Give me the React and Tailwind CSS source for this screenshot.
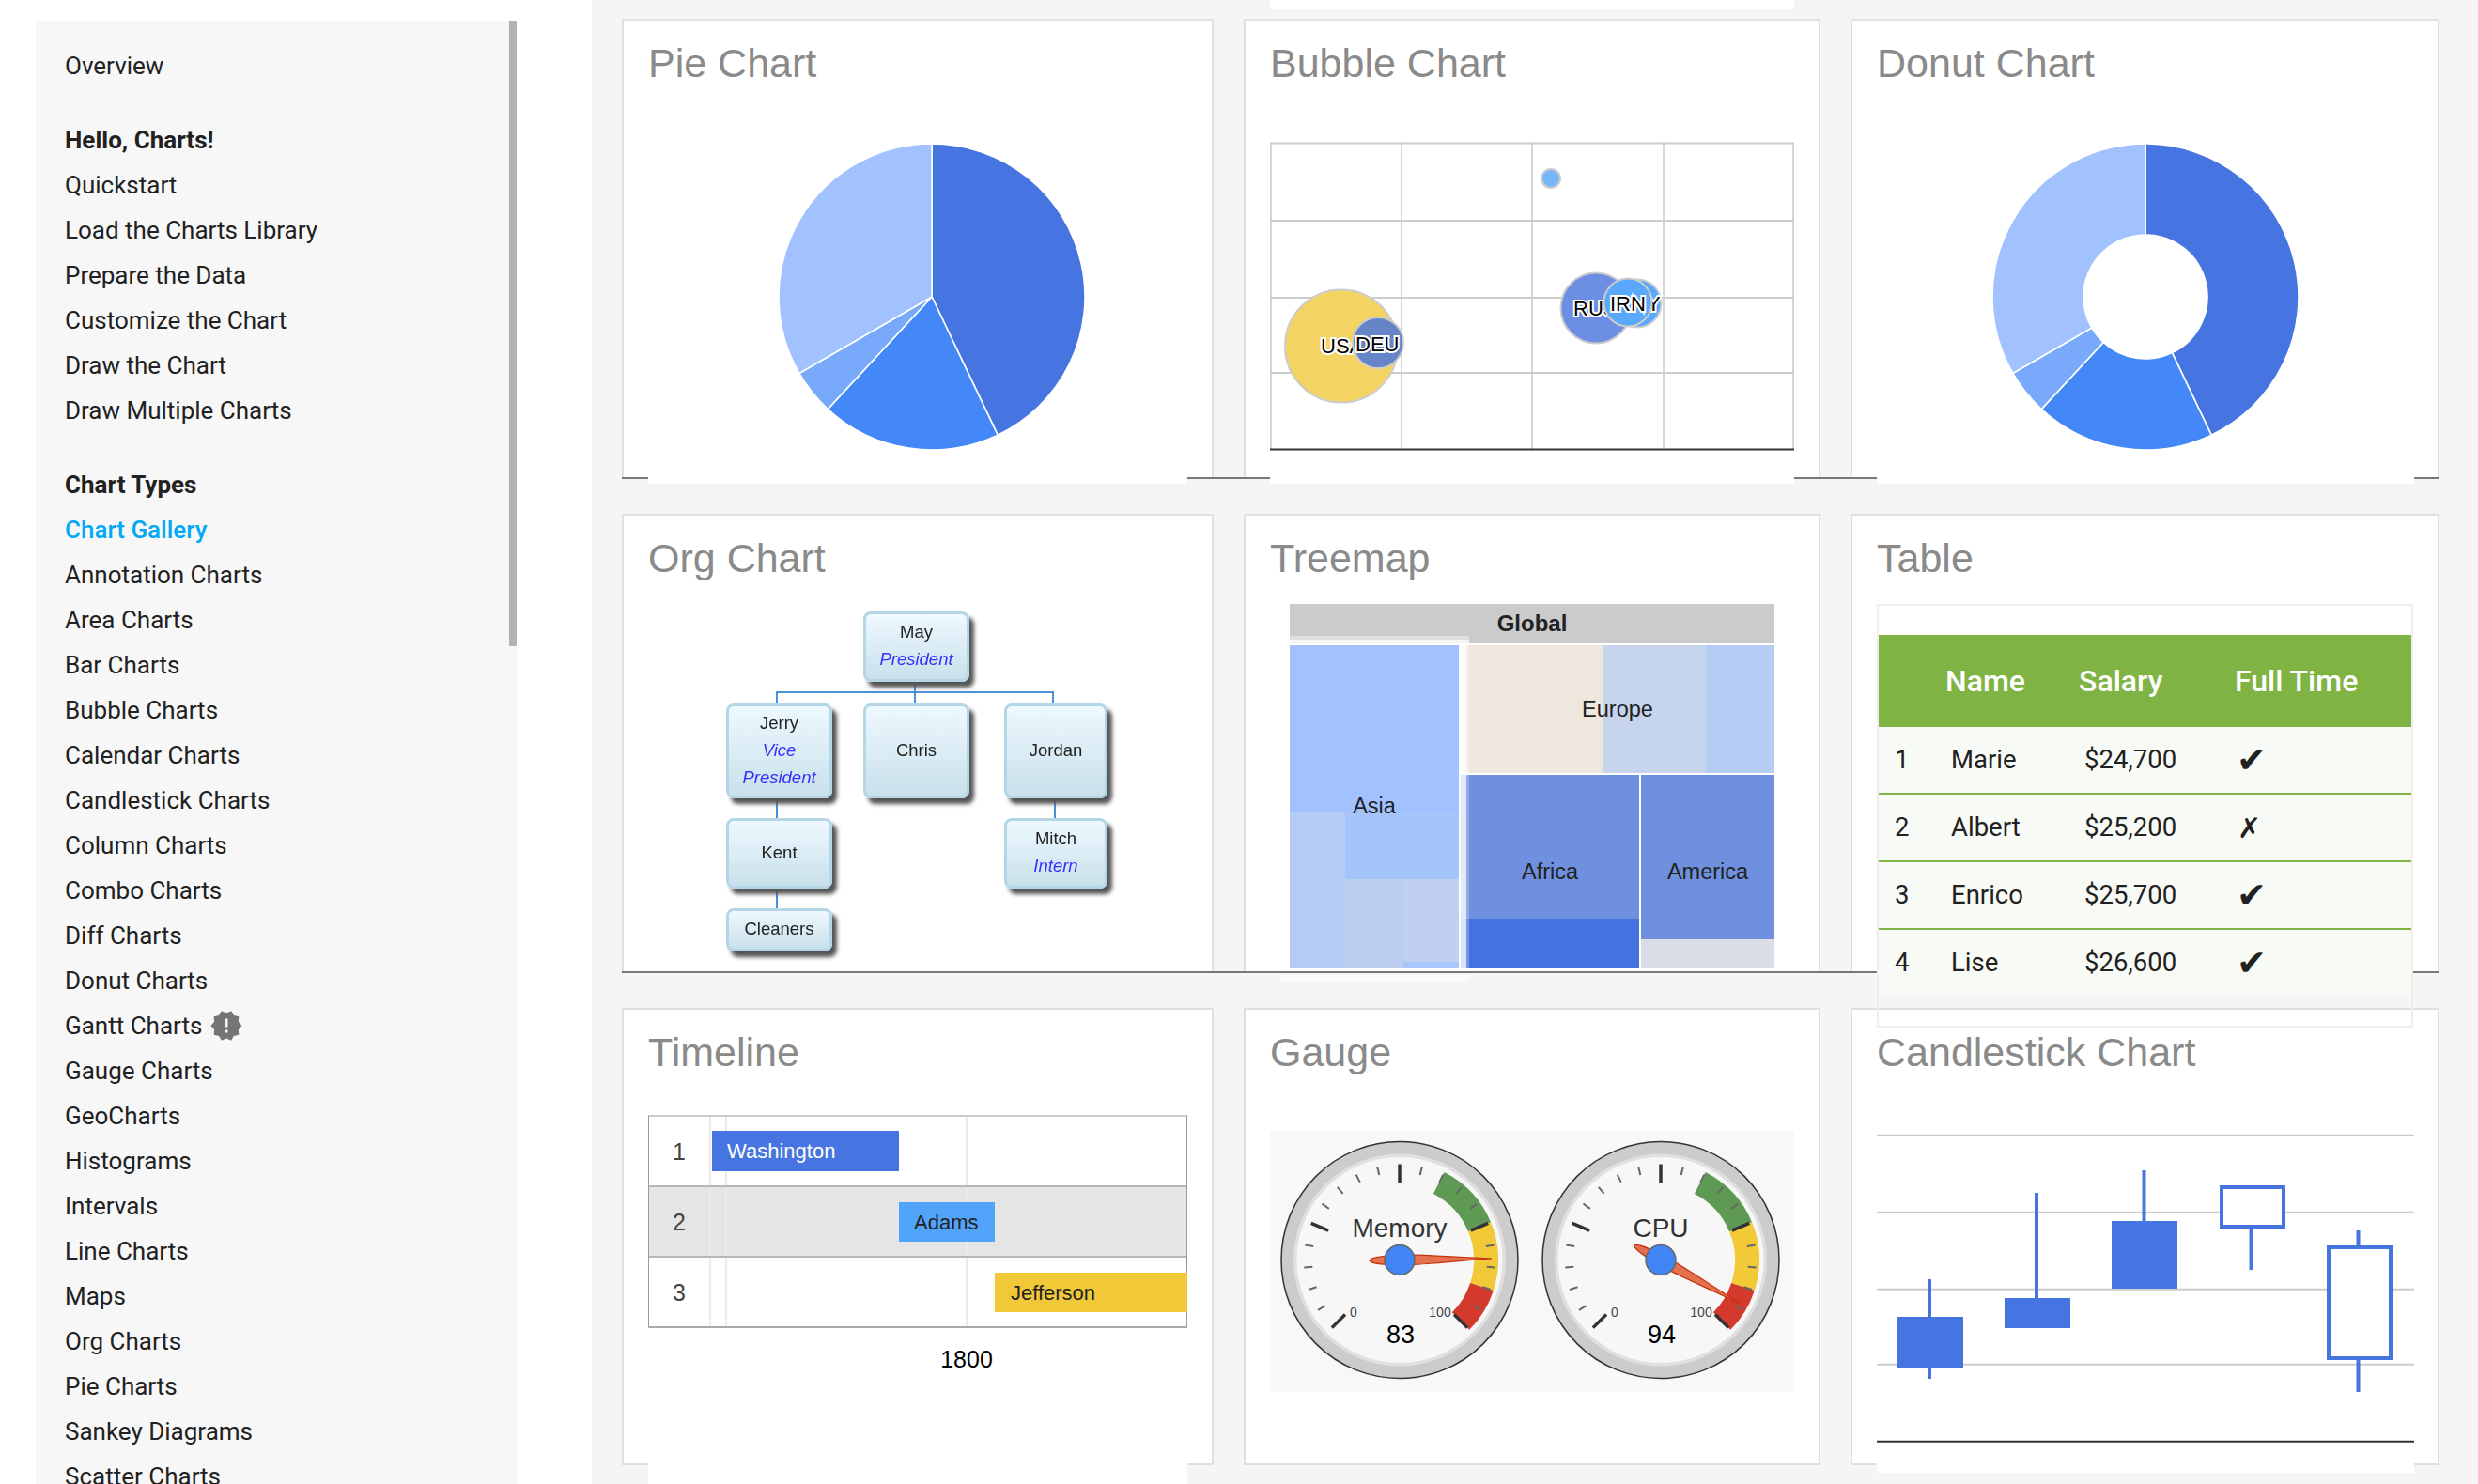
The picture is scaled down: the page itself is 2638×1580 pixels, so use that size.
import React from "react";
import { MdNewReleases } from "react-icons/md";

const BLUE = "#4674e0";

const navGroups = [
  { items: ["Overview"] },
  {
    title: "Hello, Charts!",
    items: ["Quickstart", "Load the Charts Library", "Prepare the Data", "Customize the Chart", "Draw the Chart", "Draw Multiple Charts"],
  },
  {
    title: "Chart Types",
    items: [
      "Chart Gallery", "Annotation Charts", "Area Charts", "Bar Charts", "Bubble Charts", "Calendar Charts",
      "Candlestick Charts", "Column Charts", "Combo Charts", "Diff Charts", "Donut Charts", "Gantt Charts",
      "Gauge Charts", "GeoCharts", "Histograms", "Intervals", "Line Charts", "Maps", "Org Charts", "Pie Charts",
      "Sankey Diagrams", "Scatter Charts",
    ],
  },
];

const polar = (cx, cy, r, deg) => {
  const a = ((deg - 90) * Math.PI) / 180;
  return [cx + r * Math.cos(a), cy + r * Math.sin(a)];
};

// ring sector, angles clockwise from twelve o'clock
const sector = (cx, cy, r1, r2, a1, a2) => {
  const large = a2 - a1 > 180 ? 1 : 0;
  const [x1, y1] = polar(cx, cy, r2, a1);
  const [x2, y2] = polar(cx, cy, r2, a2);
  const [x3, y3] = polar(cx, cy, r1, a2);
  const [x4, y4] = polar(cx, cy, r1, a1);
  return `M${x1} ${y1}A${r2} ${r2} 0 ${large} 1 ${x2} ${y2}L${x3} ${y3}A${r1} ${r1} 0 ${large} 0 ${x4} ${y4}Z`;
};

const slices = [
  [0, 154.5, "#4674e0"],
  [154.5, 222.8, "#4487f6"],
  [222.8, 240, "#78a9fb"],
  [240, 360, "#a1c2ff"],
];

// the viewBox uses page coordinates, so a chart's numbers read off the screenshot directly
const Chart = ({ x, y, w, h, className = "", children }) => (
  <svg width={w} height={h} viewBox={`${x} ${y} ${w} ${h}`} className={`relative z-10 block ${className}`}>
    {children}
  </svg>
);

const Pie = ({ cx, inner, x, w }) => (
  <Chart x={x} y={116} w={w} h={399} className="bg-white">
    {slices.map(([a, b, fill]) => (
      <path key={a} d={sector(cx, 316, inner, 163, a, b)} fill={fill} stroke="#fff" strokeWidth="1.6" />
    ))}
  </Chart>
);

const Bubble = ({ cx, cy, r, fill }) => (
  <circle cx={cx} cy={cy} r={r} fill={fill} stroke="#ccc" strokeWidth="2" />
);

const Label = ({ x, y, children }) => (
  <text x={x} y={y} fontSize="22" fill="#000" stroke="#fff" strokeWidth="4" dominantBaseline="central" className="[paint-order:stroke]">
    {children}
  </text>
);

const BubbleChart = () => (
  <Chart x={1352} y={116} w={558} h={399} className="bg-white">
    {[152.5, 235, 317, 397].map((y) => (
      <line key={y} x1="1352" x2="1910" y1={y} y2={y} stroke="#ccc" strokeWidth="2" />
    ))}
    {[1353, 1492, 1631, 1771, 1909].map((x) => (
      <line key={x} x1={x} x2={x} y1="152" y2="478" stroke="#c8c8c8" strokeWidth="1.5" />
    ))}
    <line x1="1352" x2="1910" y1="478.5" y2="478.5" stroke="#333" strokeWidth="2" />
    <Bubble cx={1651} cy={190} r={10} fill="#78b6fc" />
    <Bubble cx={1428} cy={368.5} r={60} fill="#f3d463" />
    <Label x={1406} y={368}>USA</Label>
    <Bubble cx={1467} cy={365} r={27} fill="#6585c6" />
    <Label x={1443} y={366}>DEU</Label>
    <Bubble cx={1699} cy={328} r={37.5} fill="#6c8fe3" />
    <Label x={1675} y={328}>RUS</Label>
    <Bubble cx={1743} cy={323} r={25.5} fill="#5aa8fc" />
    <Label x={1753} y={323}>Y</Label>
    <Bubble cx={1733} cy={322} r={25.5} fill="#5aa8fc" />
    <Label x={1714} y={323}>IRN</Label>
  </Chart>
);

const orgNodes = [
  { x: 919, y: 651, w: 113, h: 75, name: "May", role: ["President"] },
  { x: 773, y: 749, w: 113, h: 101, name: "Jerry", role: ["Vice", "President"] },
  { x: 919, y: 749, w: 113, h: 101, name: "Chris" },
  { x: 1069, y: 749, w: 110, h: 101, name: "Jordan" },
  { x: 773, y: 871, w: 113, h: 75, name: "Kent" },
  { x: 1069, y: 871, w: 110, h: 75, name: "Mitch", role: ["Intern"] },
  { x: 773, y: 967, w: 113, h: 46, name: "Cleaners" },
];

const orgLines = [
  [973, 726, 2, 11],
  [826, 736, 296, 2],
  [826, 736, 2, 13],
  [973, 736, 2, 13],
  [1120, 736, 2, 13],
  [826, 850, 2, 21],
  [1122, 850, 2, 21],
  [826, 946, 2, 21],
];

const OrgChart = () => (
  <div className="relative z-10 h-[390px] bg-white blur-[0.5px]">
    {orgLines.map(([x, y, w, h]) => (
      <div
        key={`${x}-${y}`}
        className="absolute bg-[#4a90d9]"
        style={{ left: x - 690, top: y - 643, width: w, height: h }}
      />
    ))}
    {orgNodes.map((n) => (
      <div
        key={n.name}
        className="absolute flex flex-col items-center justify-center rounded-lg border-[3px] border-[#b4d6e6] bg-gradient-to-b from-[#eef8ff] to-[#c9e1eb] pb-[3px] text-[18.5px] leading-[29px] text-[#222] shadow-[5px_6px_4px_#555]"
        style={{ left: n.x - 690, top: n.y - 643, width: n.w, height: n.h }}
      >
        <span>{n.name}</span>
        {n.role?.map((r) => (
          <span key={r} className="italic text-[#3333ff]">{r}</span>
        ))}
      </div>
    ))}
  </div>
);

const treeCells = [
  [1373, 643, 516, 42, "#cbcbcb"],
  [1373, 687, 180, 177, "#a1c2ff"],
  [1373, 864, 59, 167, "#b4ccf5"],
  [1432, 864, 121, 72, "#a5c5fa"],
  [1432, 936, 62, 95, "#bccef0"],
  [1494, 936, 59, 88, "#bfd0f0"],
  [1494, 1024, 59, 7, "#a8c6fb"],
  [1555, 687, 151, 136, "#efe7dd"],
  [1706, 687, 110, 136, "#c7d4ee"],
  [1816, 687, 73, 136, "#b5ccf5"],
  [1555, 825, 190, 153, "#6e90de"],
  [1555, 978, 190, 53, "#4472de"],
  [1747, 825, 142, 175, "#6e90de"],
  [1747, 1000, 142, 31, "#dadde6"],
  // pale shadow of the hovered Asia cell
  [1373, 677, 191, 4, "#dfdfdf"],
  [1373, 681, 191, 4, "#f5f5f5"],
  [1555, 687, 6, 136, "rgba(255,255,255,.85)"],
  [1561, 687, 3, 136, "rgba(255,255,255,.4)"],
  [1555, 825, 6, 206, "rgba(255,255,255,.8)"],
  [1561, 825, 3, 206, "rgba(255,255,255,.25)"],
];

const treeLabels = [
  ["Asia", 1463, 858],
  ["Europe", 1722, 755],
  ["Africa", 1650, 928],
  ["America", 1818, 928],
];

const Treemap = () => (
  <Chart x={1352} y={643} w={558} h={403}>
    <rect x="1352" y="643" width="558" height="390" fill="#fff" />
    {treeCells.map(([x, y, w, h, fill]) => (
      <rect key={`${x}-${y}-${w}`} x={x} y={y} width={w} height={h} fill={fill} />
    ))}
    <rect x="1364" y="1038" width="200" height="7" fill="#fafafa" />
    <text x="1631" y="663" fontSize="24" fontWeight="700" fill="#222" textAnchor="middle" dominantBaseline="central">Global</text>
    {treeLabels.map(([t, x, y]) => (
      <text key={t} x={x} y={y} fontSize="23.5" fill="#222" textAnchor="middle" dominantBaseline="central">{t}</text>
    ))}
  </Chart>
);

const tableRows = [
  ["1", "Marie", "$24,700", "✔"],
  ["2", "Albert", "$25,200", "✗"],
  ["3", "Enrico", "$25,700", "✔"],
  ["4", "Lise", "$26,600", "✔"],
];

const TableChart = () => (
  <div className="relative z-30 h-[451px] border-2 border-[#eee] pt-[31px] font-['Roboto',sans-serif]">
    <div className="grid h-[98px] grid-cols-[71px_142px_166px_1fr] items-center bg-[#7fb344] text-[32px] font-medium text-white">
      <span />
      <span>Name</span>
      <span>Salary</span>
      <span>Full Time</span>
    </div>
    {tableRows.map(([n, name, pay, full]) => (
      <div
        key={n}
        className="grid h-[72px] grid-cols-[71px_142px_166px_1fr] items-center border-b-2 border-[#7fb344] bg-[#f8faf6] text-[27.5px] text-[#212121] last:h-[70px] last:border-b-0"
      >
        <span className="pl-[17px]">{n}</span>
        <span className="pl-[6px]">{name}</span>
        <span className="pl-[6px]">{pay}</span>
        <span className={`font-['DejaVu_Sans',sans-serif] ${full === "✔" ? "pl-[2px] text-[38px] leading-[40px]" : "pl-[3px] text-[30px] font-bold"}`}>{full}</span>
      </div>
    ))}
  </div>
);

const timelineBars = [
  ["Washington", 758, 1204, 199, 43, BLUE, "#fff", 774],
  ["Adams", 957, 1280, 102, 42, "#52a4fb", "#222", 973],
  ["Jefferson", 1059, 1355, 205, 42, "#f1c837", "#222", 1076],
];

const Timeline = () => (
  <Chart x={690} y={1169} w={574} h={411} className="bg-white">
    <rect x="690.5" y="1188" width="573" height="225" fill="#fff" stroke="#9a9a9a" />
    <rect x="691" y="1263" width="572" height="75" fill="#e5e5e5" />
    {[756, 773, 1029].map((x) => (
      <line key={x} x1={x} x2={x} y1="1189" y2="1412" stroke="#ebebeb" strokeWidth="2" />
    ))}
    {[1263, 1338].map((y) => (
      <line key={y} x1="691" x2="1263" y1={y} y2={y} stroke="#b7b7b7" strokeWidth="2" />
    ))}
    <line x1="690" x2="1264" y1="1413" y2="1413" stroke="#aaa" strokeWidth="2" />
    {[["1", 1226], ["2", 1301], ["3", 1376]].map(([t, y]) => (
      <text key={t} x="723" y={y} fontSize="25" fill="#444" textAnchor="middle" dominantBaseline="central">{t}</text>
    ))}
    {timelineBars.map(([t, x, y, w, h, fill, color, tx]) => (
      <g key={t}>
        <rect x={x} y={y} width={w} height={h} fill={fill} />
        <text x={tx} y={y + h / 2} fontSize="22" fill={color} dominantBaseline="central">{t}</text>
      </g>
    ))}
    <text x="1029" y="1447" fontSize="25" fill="#000" textAnchor="middle" dominantBaseline="central">1800</text>
  </Chart>
);

const ticks = Array.from({ length: 21 }, (_, i) => i);

const Gauge = ({ cx, label, value }) => {
  const cy = 1341.5;
  const needle = -135 + 2.7 * value;
  return (
    <g>
      <circle cx={cx} cy={cy} r="126" fill="#ccc" stroke="#333" strokeWidth="1.5" />
      <circle cx={cx} cy={cy} r="113" fill="#e0e0e0" />
      <circle cx={cx} cy={cy} r="109.5" fill="#f7f7f7" />
      <path d={sector(cx, cy, 79, 105, 27, 67.5)} fill="#5f9a54" />
      <path d={sector(cx, cy, 79, 105, 67.5, 108)} fill="#f2c936" />
      <path d={sector(cx, cy, 79, 105, 108, 135)} fill="#d33a2b" />
      {ticks.map((i) => {
        const deg = -135 + i * 13.5;
        const major = i % 5 === 0;
        const [x1, y1] = polar(cx, cy, major ? 82 : 93, deg);
        const [x2, y2] = polar(cx, cy, 102, deg);
        return (
          <line key={i} x1={x1} y1={y1} x2={x2} y2={y2} stroke={major ? "#333" : "#666"} strokeWidth={major ? 3.5 : 2} />
        );
      })}
      <text x={cx} y="1307" fontSize="28" fill="#333" textAnchor="middle" dominantBaseline="central">{label}</text>
      <text x={cx - 49} y="1397" fontSize="14" fill="#444" textAnchor="middle" dominantBaseline="central">0</text>
      <text x={cx + 43} y="1397" fontSize="14" fill="#444" textAnchor="middle" dominantBaseline="central">100</text>
      <text x={cx + 1} y="1421" fontSize="27" fill="#000" textAnchor="middle" dominantBaseline="central">{value}</text>
      <path
        transform={`translate(${cx} ${cy}) rotate(${needle})`}
        d="M0 -98C2 -60 6 -20 5.5 0C5 15 3 32 0 32C-3 32 -5 15 -5.5 0C-6 -20 -2 -60 0 -98Z"
        fill="#e5724f"
        stroke="#c63310"
        strokeWidth="1.2"
      />
      <circle cx={cx} cy={cy} r="16" fill="#4285f4" stroke="#666" strokeWidth="1.5" />
    </g>
  );
};

const GaugeChart = () => (
  <Chart x={1352} y={1169} w={558} h={313}>
    <rect x="1352" y="1204" width="558" height="278" fill="#f8f8f8" />
    <Gauge cx={1490} label="Memory" value={83} />
    <Gauge cx={1768} label="CPU" value={94} />
  </Chart>
);

const candles = [
  { x: 2020, y: 1402, h: 54, wick: 2054, top: 1362, bottom: 1468, solid: true },
  { x: 2134, y: 1382, h: 32, wick: 2168, top: 1270, bottom: 1414, solid: true },
  { x: 2248, y: 1300, h: 72, wick: 2282.5, top: 1246, bottom: 1372, solid: true },
  { x: 2363, y: 1262, h: 46, wick: 2396.5, top: 1308, bottom: 1352 },
  { x: 2477, y: 1326, h: 122, wick: 2510.5, top: 1310, bottom: 1482 },
];

const Candlestick = () => (
  <Chart x={1998} y={1169} w={572} h={399} className="bg-white">
    {[1208.7, 1290.7, 1372.7, 1452.7].map((y) => (
      <line key={y} x1="1998" x2="2570" y1={y} y2={y} stroke="#ccc" strokeWidth="2" />
    ))}
    <line x1="1998" x2="2570" y1="1534.7" y2="1534.7" stroke="#333" strokeWidth="2" />
    {candles.map((c) => (
      <g key={c.x}>
        <line x1={c.wick} x2={c.wick} y1={c.top} y2={c.bottom} stroke={BLUE} strokeWidth="4" />
        {c.solid ? (
          <rect x={c.x} y={c.y} width="70" height={c.h} fill={BLUE} />
        ) : (
          <rect x={c.x + 2} y={c.y + 2} width="66" height={c.h - 4} fill="#fff" stroke={BLUE} strokeWidth="4" />
        )}
      </g>
    ))}
  </Chart>
);

const Card = ({ title, children }) => (
  <div className="border-2 border-[#e0e0e0] bg-white px-[26px]">
    <h2 className="h-[94px] pt-[20px] text-[43px] leading-[50px] font-normal text-[#8a8a8a]">{title}</h2>
    {children}
  </div>
);

const Row = ({ rows, line, lineOnTop, children }) => (
  <div className={`relative grid grid-cols-[630px_614px_627px] gap-x-[32px] ${rows}`}>
    {children}
    {line && <div className={`absolute bottom-0 left-0 h-[2px] w-[1935px] bg-[#777] ${lineOnTop ? "z-20" : "z-0"}`} />}
  </div>
);

const Sidebar = () => (
  <aside className="w-[630px] shrink-0 bg-white pt-[22px] pl-[38px]">
    <nav className="relative h-full w-[512px] bg-[#f7f7f7] pt-[24px] pl-[31px] font-['Roboto',sans-serif] text-[26px] leading-[48px] text-[#212121]">
      <div className="absolute top-0 right-0 h-[666px] w-[8px] bg-[#b3b3b3]" />
      <div className="flex flex-col gap-[31px]">
        {navGroups.map((group, i) => (
          <ul key={i}>
            {group.title && <li className="font-bold">{group.title}</li>}
            {group.items.map((item) => (
              <li key={item} className={item === "Chart Gallery" ? "flex items-center font-medium text-[#03a9f4]" : "flex items-center"}>
                {item}
                {item === "Gantt Charts" && <MdNewReleases className="ml-[8px] text-[36px] text-[#757575]" />}
              </li>
            ))}
          </ul>
        ))}
      </div>
    </nav>
  </aside>
);

export default function App() {
  return (
    <div className="flex h-[1580px] w-[2638px] overflow-hidden font-['Liberation_Sans',sans-serif]">
      <Sidebar />
      <main className="flex-1 bg-[#f5f5f5] pl-[32px]">
        <div className="ml-[690px] h-[10px] w-[558px] bg-white" />
        <div className="mt-[10px] flex flex-col gap-[37px]">
          <Row rows="grid-rows-[490px]" line>
            <Card title="Pie Chart"><Pie cx={992} inner={0} x={690} w={574} /></Card>
            <Card title="Bubble Chart"><BubbleChart /></Card>
            <Card title="Donut Chart"><Pie cx={2284} inner={66} x={1998} w={572} /></Card>
          </Row>
          <Row rows="grid-rows-[489px]" line lineOnTop>
            <Card title="Org Chart"><OrgChart /></Card>
            <Card title="Treemap"><Treemap /></Card>
            <Card title="Table"><TableChart /></Card>
          </Row>
          <Row rows="grid-rows-[487px]">
            <Card title="Timeline"><Timeline /></Card>
            <Card title="Gauge"><GaugeChart /></Card>
            <Card title="Candlestick Chart"><Candlestick /></Card>
          </Row>
        </div>
      </main>
    </div>
  );
}
